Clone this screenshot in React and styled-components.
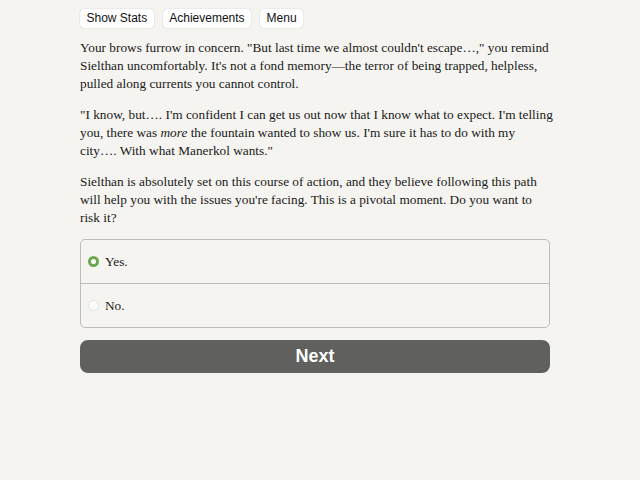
import React, { useState } from "react";
import styled, { createGlobalStyle } from "styled-components";

const Global = createGlobalStyle`
  html, body {
    margin: 0;
    padding: 0;
    background: #f5f4f0;
  }
`;

const Page = styled.div`
  width: 470px;
  margin: 0 0 0 80px;
  padding-top: 9px;
  font-family: "Liberation Serif", "Times New Roman", serif;
  color: #1a1a1a;
`;

const Toolbar = styled.div`
  display: flex;
  gap: 9px;
`;

const TopButton = styled.button`
  height: 19px;
  padding: 0 6.5px;
  border: none;
  border-radius: 4px;
  background: #ffffff;
  box-shadow: 0 0 1px rgba(0, 0, 0, 0.35);
  font-family: "Liberation Sans", Arial, sans-serif;
  font-size: 12px;
  color: #111;
  line-height: 19px;
`;

const Text = styled.div`
  margin-top: 11px;
  font-size: 13.3px;
  line-height: 18px;
  white-space: nowrap;
  p {
    margin: 0 0 13px;
  }
  p:last-child {
    margin-bottom: 0;
  }
`;

const Choices = styled.div`
  margin-top: 12px;
  border: 1px solid #bdbcb8;
  border-radius: 5px;
  overflow: hidden;
`;

const Option = styled.label`
  display: flex;
  align-items: center;
  gap: 6px;
  height: 43px;
  padding: 0 0 0 7px;
  font-size: 13.3px;
  cursor: pointer;
  & + & {
    border-top: 1px solid #bdbcb8;
  }
`;

const Radio = styled.span`
  width: 11px;
  height: 11px;
  border-radius: 50%;
  box-sizing: border-box;
  background: ${(p) => (p.$checked ? "#ffffff" : "#fbfbfa")};
  border: ${(p) => (p.$checked ? "3px solid #6aa84f" : "1px solid #e4e3df")};
`;

const NextButton = styled.button`
  display: block;
  width: 100%;
  height: 33px;
  margin-top: 12px;
  border: none;
  border-radius: 8px;
  background: #60605e;
  color: #fff;
  font-family: "Liberation Sans", Arial, sans-serif;
  font-weight: bold;
  font-size: 18px;
`;

export default function App() {
  const [choice, setChoice] = useState("yes");
  return (
    <>
      <Global />
      <Page>
        <Toolbar>
          <TopButton>Show Stats</TopButton>
          <TopButton>Achievements</TopButton>
          <TopButton>Menu</TopButton>
        </Toolbar>
        <Text>
          <p>
            Your brows furrow in concern. "But last time we almost couldn't escape…," you remind
            <br />
            Sielthan uncomfortably. It's not a fond memory—the terror of being trapped, helpless,
            <br />
            pulled along currents you cannot control.
          </p>
          <p>
            "I know, but…. I'm confident I can get us out now that I know what to expect. I'm telling
            <br />
            you, there was <i>more</i> the fountain wanted to show us. I'm sure it has to do with my
            <br />
            city…. With what Manerkol wants."
          </p>
          <p>
            Sielthan is absolutely set on this course of action, and they believe following this path
            <br />
            will help you with the issues you're facing. This is a pivotal moment. Do you want to
            <br />
            risk it?
          </p>
        </Text>
        <Choices>
          <Option onClick={() => setChoice("yes")}>
            <Radio $checked={choice === "yes"} />
            Yes.
          </Option>
          <Option onClick={() => setChoice("no")}>
            <Radio $checked={choice === "no"} />
            No.
          </Option>
        </Choices>
        <NextButton>Next</NextButton>
      </Page>
    </>
  );
}
